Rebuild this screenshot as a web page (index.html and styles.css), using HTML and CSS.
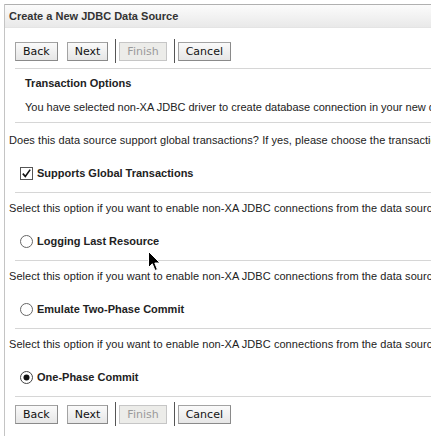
FILE: index.html
```html
<!DOCTYPE html>
<html>
<head>
<meta charset="utf-8">
<link rel="stylesheet" href="styles.css">
</head>
<body>
<div class="page">
  <div class="header">Create a New JDBC Data Source</div>
  <div class="toolbar">
    <button class="btn">Back</button>
    <button class="btn">Next</button>
    <span class="sep"></span>
    <button class="btn disabled">Finish</button>
    <span class="sep"></span>
    <button class="btn">Cancel</button>
  </div>
  <div class="rule r-top"></div>
  <div class="heading">Transaction Options</div>
  <div class="intro">You have selected non-XA JDBC driver to create database connection in your new data source.</div>
  <div class="rule r-intro"></div>
  <div class="desc d-first">Does this data source support global transactions? If yes, please choose the transaction protocol for this data source.</div>
  <div class="option">
    <svg class="ctl" width="13" height="13" viewBox="0 0 13 13"><rect x="0.5" y="0.5" width="12" height="12" fill="#fff" stroke="#555"/><path d="M2.8 6.6 L5.3 9.4 L10.2 2.6" fill="none" stroke="#111" stroke-width="1.6"/></svg>
    <span>Supports Global Transactions</span>
  </div>
  <div class="rule"></div>
  <div class="desc">Select this option if you want to enable non-XA JDBC connections from the data source to participate in global transactions.</div>
  <div class="option">
    <svg class="ctl" width="13" height="13" viewBox="0 0 13 13"><circle cx="6.5" cy="6.5" r="6" fill="#fff" stroke="#666"/></svg>
    <span>Logging Last Resource</span>
  </div>
  <div class="rule"></div>
  <div class="desc">Select this option if you want to enable non-XA JDBC connections from the data source to emulate participation in global transactions.</div>
  <div class="option">
    <svg class="ctl" width="13" height="13" viewBox="0 0 13 13"><circle cx="6.5" cy="6.5" r="6" fill="#fff" stroke="#666"/></svg>
    <span>Emulate Two-Phase Commit</span>
  </div>
  <div class="rule"></div>
  <div class="desc">Select this option if you want to enable non-XA JDBC connections from the data source to participate in global transactions using the one-phase commit.</div>
  <div class="option">
    <svg class="ctl" width="13" height="13" viewBox="0 0 13 13"><circle cx="6.5" cy="6.5" r="6" fill="#fff" stroke="#444"/><circle cx="6.5" cy="6.5" r="3" fill="#111"/></svg>
    <span>One-Phase Commit</span>
  </div>
  <div class="rule r-bottom"></div>
  <div class="toolbar tb-bottom">
    <button class="btn">Back</button>
    <button class="btn">Next</button>
    <span class="sep"></span>
    <button class="btn disabled">Finish</button>
    <span class="sep"></span>
    <button class="btn">Cancel</button>
  </div>
</div>
<svg class="cursor" width="13" height="21" viewBox="0 0 13 21"><path d="M0.5 0.5 L0.5 16.5 L4.3 12.8 L7 19.5 L9.4 18.5 L6.8 12 L12 12 Z" fill="#000" stroke="#fff" stroke-width="1"/></svg>
</body>
</html>
```
FILE: styles.css
```css
html, body {
  margin: 0;
  padding: 0;
  background: #fff;
}
body {
  font-family: "Liberation Sans", Arial, sans-serif;
  font-size: 11px;
  color: #222;
  overflow: hidden;
  width: 431px;
  height: 436px;
  position: relative;
}
.page {
  margin: 4px 0 0 4px;
  border-left: 1px solid #c4c4c4;
  height: 432px;
  overflow: hidden;
}
.header {
  border-top: 1px solid #b0b0b0;
  border-bottom: 1px solid #e4e4e4;
  box-sizing: border-box;
  height: 24px;
  line-height: 22px;
  padding-left: 4px;
  font-weight: bold;
  font-size: 11px;
  color: #333;
  background: linear-gradient(#fbfbfb, #e9e9e9);
}
.toolbar {
  display: flex;
  align-items: center;
  height: 24px;
  margin-top: 11px;
  padding-left: 10px;
}
.btn {
  font-family: "DejaVu Sans", sans-serif;
  font-size: 11px;
  color: #111;
  height: 19px;
  padding: 0 7px;
  margin: 0;
  border: 1px solid #a3a3a3;
  border-right-color: #8a8a8a;
  border-bottom-color: #8a8a8a;
  background: linear-gradient(#fafafa, #e6e6e6);
  line-height: 17px;
}
.btn + .btn { margin-left: 9px; }
.btn.disabled {
  color: #9a9a9a;
  background: #ecece9;
  border-color: #c6c6c6;
}
.sep {
  width: 1px;
  height: 24px;
  background: #555;
  margin: 0 3px 0 7px;
}
.rule {
  height: 1px;
  margin: 12px 0 0 10px;
  background: #d6d6d6;
}
.r-top { margin-top: 5px; }
.r-intro { margin-top: 8px; }
.r-bottom { margin-top: 12px; }
.tb-bottom { margin-top: 5px; }
.heading {
  font-weight: bold;
  margin-left: 20px;
  margin-top: 7px;
  line-height: 14px;
  white-space: nowrap;
}
.intro {
  margin-left: 20px;
  margin-top: 10px;
  line-height: 14px;
  white-space: nowrap;
}
.desc {
  margin-left: 4px;
  margin-top: 8px;
  line-height: 14px;
  white-space: nowrap;
  letter-spacing: 0.06px;
}
.d-first { margin-top: 10px; }
.option {
  display: flex;
  align-items: center;
  gap: 4px;
  margin-left: 15px;
  margin-top: 19px;
  height: 14px;
  font-weight: bold;
  white-space: nowrap;
}
.ctl { flex: none; }
.cursor {
  position: absolute;
  left: 148px;
  top: 251px;
}
```
